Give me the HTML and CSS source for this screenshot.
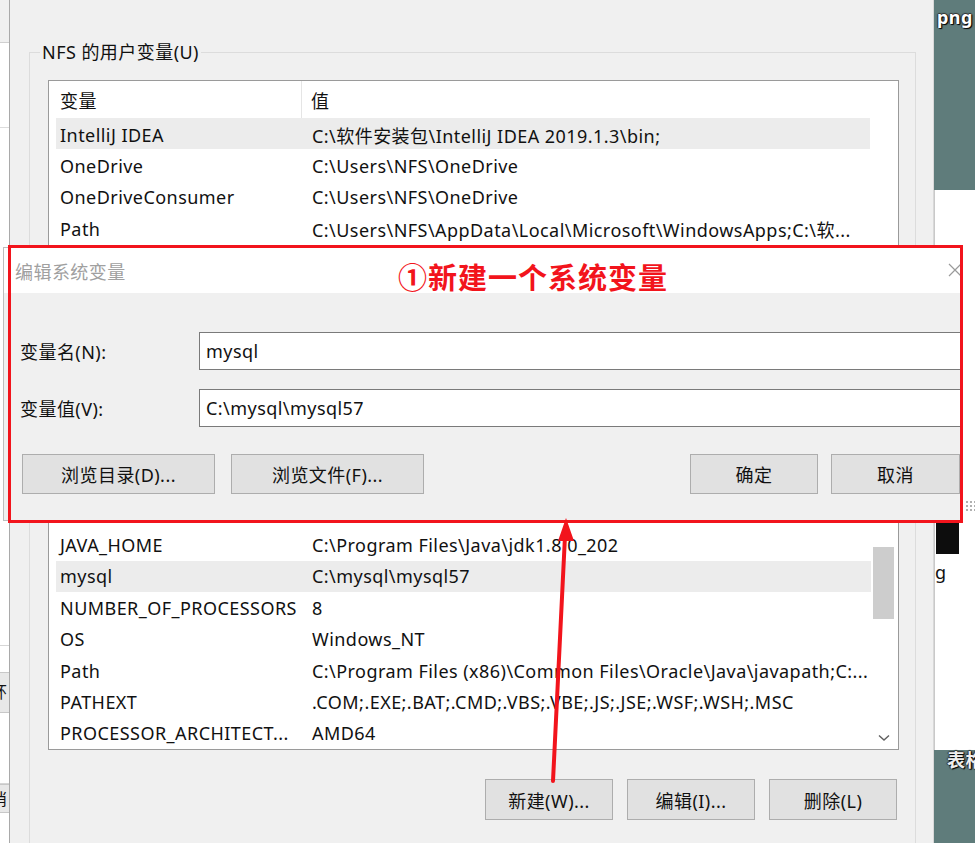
FILE: index.html
```html
<!DOCTYPE html>
<html lang="zh-CN">
<head>
<meta charset="utf-8">
<title>编辑系统变量</title>
<link rel="stylesheet" href="styles.css">
</head>
<body>
<div class="screen">
  <div class="left-strip">
    <div class="ls-top"></div>
    <div class="ls-white ls-a"></div>
    <div class="ls-white ls-b"></div>
    <div class="ls-white ls-c"></div>
    <div class="ls-cell"><span>环</span></div>
    <div class="ls-white ls-d"></div>
    <div class="ls-cell ls-cell2"><span>消</span></div>
    <div class="ls-white ls-e"></div>
  </div>

  <div class="window">
    <fieldset class="group group-user">
      <legend>NFS 的用户变量(U)</legend>
      <div class="list list-user">
        <div class="list-head">
          <span class="c1">变量</span><span class="sep"></span><span class="c2">值</span>
        </div>
        <div class="rows">
          <div class="row sel"><span class="c1">IntelliJ IDEA</span><span class="c2">C:\软件安装包\IntelliJ IDEA 2019.1.3\bin;</span></div>
          <div class="row"><span class="c1">OneDrive</span><span class="c2">C:\Users\NFS\OneDrive</span></div>
          <div class="row"><span class="c1">OneDriveConsumer</span><span class="c2">C:\Users\NFS\OneDrive</span></div>
          <div class="row"><span class="c1">Path</span><span class="c2">C:\Users\NFS\AppData\Local\Microsoft\WindowsApps;C:\软...</span></div>
          <div class="row"><span class="c1">TEMP</span><span class="c2">C:\Users\NFS\AppData\Local\Temp</span></div>
        </div>
      </div>
    </fieldset>

    <fieldset class="group group-sys">
      <legend>系统变量(S)</legend>
      <div class="list list-sys">
        <div class="rows rows-bottom">
          <div class="row"><span class="c1">JAVA_HOME</span><span class="c2">C:\Program Files\Java\jdk1.8.0_202</span></div>
          <div class="row sel"><span class="c1">mysql</span><span class="c2">C:\mysql\mysql57</span></div>
          <div class="row"><span class="c1">NUMBER_OF_PROCESSORS</span><span class="c2">8</span></div>
          <div class="row"><span class="c1">OS</span><span class="c2">Windows_NT</span></div>
          <div class="row"><span class="c1">Path</span><span class="c2">C:\Program Files (x86)\Common Files\Oracle\Java\javapath;C:...</span></div>
          <div class="row"><span class="c1">PATHEXT</span><span class="c2">.COM;.EXE;.BAT;.CMD;.VBS;.VBE;.JS;.JSE;.WSF;.WSH;.MSC</span></div>
          <div class="row"><span class="c1">PROCESSOR_ARCHITECT...</span><span class="c2">AMD64</span></div>
        </div>
        <div class="vscroll">
          <div class="thumb"></div>
          <svg class="down" width="12" height="8" viewBox="0 0 12 8"><polyline points="1,1.5 6,6 11,1.5" fill="none" stroke="#606060" stroke-width="1.4"/></svg>
        </div>
      </div>
      <div class="btns">
        <button class="btn">新建(W)...</button>
        <button class="btn">编辑(I)...</button>
        <button class="btn">删除(L)</button>
      </div>
    </fieldset>
  </div>

  <div class="right-strip">
    <div class="rs-teal rs-top"><span class="shadow-text">png</span></div>
    <div class="rs-white">
      <div class="grip"></div>
      <div class="black-block"></div>
      <div class="rs-g">g</div>
    </div>
    <div class="rs-teal rs-bottom"><span class="shadow-text">表格</span></div>
  </div>

  <div class="dialog">
    <div class="dlg-title">
      <span class="dlg-title-text">编辑系统变量</span>
      <svg class="dlg-close" width="14" height="14" viewBox="0 0 14 14"><path d="M1 1 L13 13 M13 1 L1 13" stroke="#9a9a9a" stroke-width="1.2" fill="none"/></svg>
    </div>
    <div class="dlg-body">
      <div class="field">
        <label class="field-label">变量名(N):</label>
        <div class="input">mysql</div>
      </div>
      <div class="field">
        <label class="field-label">变量值(V):</label>
        <div class="input">C:\mysql\mysql57</div>
      </div>
      <div class="dlg-btns">
        <button class="btn btn-wide">浏览目录(D)...</button>
        <button class="btn btn-wide">浏览文件(F)...</button>
        <span class="spacer"></span>
        <button class="btn btn-ok">确定</button>
        <button class="btn btn-cancel">取消</button>
      </div>
    </div>
  </div>

  <div class="redbox"></div>
  <div class="note">①新建一个系统变量</div>
  <svg class="arrow" width="60" height="280" viewBox="530 505 60 280">
    <line x1="553" y1="781" x2="565" y2="536" stroke="#f2141c" stroke-width="4" stroke-linecap="round"/>
    <polygon points="566,518 558,541 574,541" fill="#f2141c"/>
  </svg>
</div>
</body>
</html>
```

FILE: styles.css
```css
* { box-sizing: border-box; }
html, body { margin: 0; padding: 0; }
body {
  font-family: "Noto Sans", "Noto Sans CJK SC", sans-serif;
  font-size: 18px;
  letter-spacing: 0.45px;
  color: #111;
  background: #f0f0f0;
}
.screen {
  position: relative;
  width: 975px;
  height: 843px;
  display: flex;
  overflow: hidden;
}

/* left strip */
.left-strip {
  width: 10px;
  flex: none;
  display: flex;
  flex-direction: column;
  border-right: 1px solid #a9a9a9;
  background: #fff;
  overflow: hidden;
}
.ls-top { height: 43px; background: #f0f0f0; border-bottom: 1px solid #d0d0d0; }
.ls-white { background: #fff; border-bottom: 1px solid #dcdcdc; }
.ls-a { height: 85px; }
.ls-b { height: 517px; border-bottom: none; }
.ls-c { height: 27px; border-top: 1px solid #d6d6d6; border-bottom: none; }
.ls-cell {
  height: 41px;
  background: #e8e8e8;
  border-top: 1px solid #c8c8c8;
  border-bottom: 1px solid #c8c8c8;
  font-size: 16px;
  line-height: 39px;
  white-space: nowrap;
}
.ls-cell span { display: inline-block; margin-left: -9px; }
.ls-d { height: 71px; border-bottom: 1px solid #d6d6d6; }
.ls-cell2 { height: 29px; line-height: 28px; }
.ls-e { flex: 1; border-bottom: none; }

/* main window */
.window {
  width: 923px;
  flex: none;
  background: #f0f0f0;
  padding: 0 17px 0 19px;
  display: flex;
  flex-direction: column;
}
.group {
  margin: 0;
  border: 1px solid #dcdcdc;
  padding: 0 16px 0 18px;
  min-width: 0;
}
.group legend {
  padding: 0 2px;
  margin-left: -8px;
  line-height: 20px;
  height: 20px;
}
.group-user {
  margin-top: 42px;
  padding-top: 18px;
  padding-bottom: 12px;
}
.group-sys {
  margin-top: 14px;
  padding-top: 10px;
  flex: 1;
  border-bottom: none;
}

.list {
  background: #fff;
  border: 1px solid #9a9a9a;
  display: flex;
  flex-direction: column;
  overflow: hidden;
}
.list-user { height: 240px; }
.list-sys {
  height: 373px;
  flex-direction: row;
}
.list-head {
  height: 37px;
  display: flex;
  align-items: center;
  padding-left: 11px;
  flex: none;
}
.list-head .c1 { width: 241px; }
.list-head .sep {
  width: 1px;
  height: 37px;
  background: #e5e5e5;
  margin-right: 9px;
}
.rows {
  display: flex;
  flex-direction: column;
  padding: 0 28px 0 7px;
}
.list-user .rows .row { padding-top: 2px; }
.rows-bottom {
  flex: 1;
  justify-content: flex-end;
  padding: 0 0 0 7px;
}
.row {
  height: 31.4px;
  display: flex;
  align-items: center;
  padding-left: 4px;
  white-space: nowrap;
  flex: none;
}
.row.sel { background: #ececec; }
.c1 { width: 252px; flex: none; }
.vscroll {
  width: 27px;
  flex: none;
  display: flex;
  flex-direction: column;
  align-items: center;
  padding: 169px 2px 7px 0;
}
.thumb { width: 21px; height: 72px; background: #cdcdcd; }
.down { margin-top: auto; }

.btns {
  display: flex;
  justify-content: flex-end;
  gap: 14px;
  margin-top: 29px;
  padding-right: 2px;
}
.btn {
  font: inherit;
  letter-spacing: inherit;
  color: #111;
  background: #e1e1e1;
  border: 1px solid #adadad;
  border-radius: 0;
  width: 128px;
  height: 41px;
  padding: 0;
  text-align: center;
}

/* right strip */
.right-strip {
  flex: 1;
  display: flex;
  flex-direction: column;
  border-left: 1px solid #d8d8d8;
}
.rs-teal { background: #5f7c7b; }
.rs-top { height: 190px; padding: 5px 0 0 3px; }
.rs-bottom { flex: 1; padding: 0 0 0 13px; }
.shadow-text {
  color: #fff;
  font-weight: bold;
  font-size: 18px;
  white-space: nowrap;
  display: block;
  text-shadow: 1px 1px 1px #000, -1px 0 1px #333, 0 -1px 1px #333, 1px 0 1px #222;
}
.rs-top .shadow-text { line-height: 24px; }
.rs-bottom .shadow-text { line-height: 20px; color: #eee; }
.rs-white {
  height: 560px;
  background: #fff;
  border-left: 1px solid #c9c9c9;
  display: flex;
  flex-direction: column;
  padding-top: 310px;
}
.grip {
  height: 12px;
  margin-left: 30px;
  background-image: radial-gradient(circle, #b0b0b0 1px, transparent 1.2px);
  background-size: 4px 4px;
}
.black-block {
  margin-top: 8px;
  width: 23px;
  height: 34px;
  background: #0d0d0d;
  margin-left: 1px;
}
.rs-g { font-size: 18px; line-height: 24px; margin-top: 6px; color: #111; }

/* dialog overlay */
.dialog {
  position: absolute;
  left: 3px;
  top: 247px;
  width: 960px;
  height: 274px;
  background: #f0f0f0;
  border: 1px solid #bdbdbd;
  display: flex;
  flex-direction: column;
}
.dlg-title {
  height: 45px;
  background: #fff;
  display: flex;
  align-items: center;
  padding: 0 0 0 11px;
  flex: none;
}
.dlg-title-text { color: #a0a0a0; flex: 1; }
.dlg-close { margin-right: 0; margin-bottom: 2px; }
.dlg-body {
  padding: 39px 1px 0 16px;
  display: flex;
  flex-direction: column;
}
.field {
  display: flex;
  align-items: center;
  height: 38px;
  margin-bottom: 19px;
}
.field-label { width: 179px; flex: none; }
.input {
  flex: 1;
  height: 38px;
  background: #fff;
  border: 1px solid #7a7a7a;
  padding-left: 6px;
  display: flex;
  align-items: center;
  white-space: nowrap;
}
.dlg-btns {
  display: flex;
  align-items: center;
  margin-top: 8px;
  padding-left: 2px;
}
.btn-wide { width: 193px; height: 40px; margin-right: 16px; }
.spacer { flex: 1; }
.btn-ok { width: 128px; height: 40px; margin-right: 13px; }
.btn-cancel { width: 129px; height: 40px; margin-right: 1px; }

.redbox {
  position: absolute;
  left: 8px;
  top: 245px;
  width: 955px;
  height: 278px;
  border: 3px solid #f2141c;
  pointer-events: none;
}
.note {
  position: absolute;
  left: 398px;
  top: 256px;
  color: #f2141c;
  font-family: "Noto Sans CJK SC", sans-serif;
  font-weight: bold;
  font-size: 29px;
  line-height: 40px;
  letter-spacing: 1px;
  white-space: nowrap;
  text-shadow: 0 0 1px #fff;
}
.arrow {
  position: absolute;
  left: 530px;
  top: 505px;
}
```
